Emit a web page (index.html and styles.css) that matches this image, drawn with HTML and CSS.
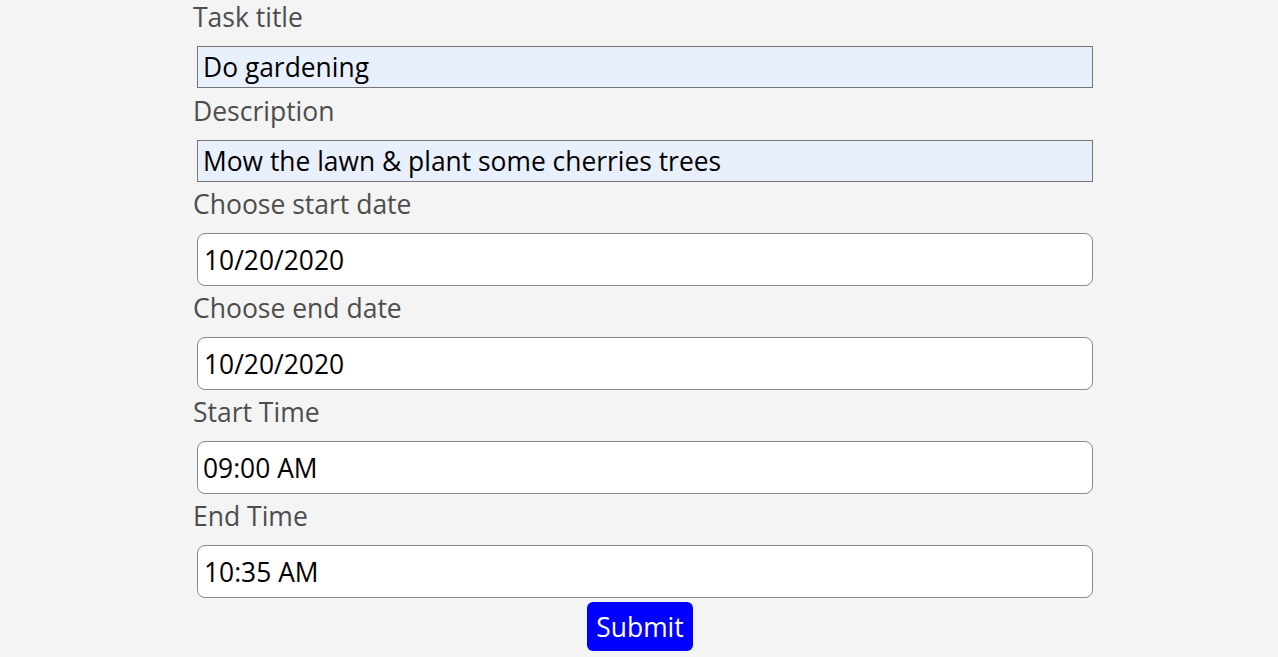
FILE: index.html
```html
<!DOCTYPE html>
<html lang="en">
<head>
<meta charset="utf-8">
<title>New task</title>
<link rel="stylesheet" href="styles.css">
</head>
<body>
<form class="task-form">
  <label class="field-label" for="title">Task title</label>
  <input class="text-input text-input-first" id="title" type="text" value="Do gardening">
  <label class="field-label" for="desc">Description</label>
  <input class="text-input" id="desc" type="text" value="Mow the lawn &amp; plant some cherries trees">
  <label class="field-label" for="sdate">Choose start date</label>
  <div class="picker" id="sdate">10/20/2020</div>
  <label class="field-label" for="edate">Choose end date</label>
  <div class="picker" id="edate">10/20/2020</div>
  <label class="field-label" for="stime">Start Time</label>
  <div class="picker picker-time" id="stime">09:00 AM</div>
  <label class="field-label" for="etime">End Time</label>
  <div class="picker" id="etime">10:35 AM</div>
  <button class="submit-btn" type="button">Submit</button>
</form>
</body>
</html>
```
FILE: styles.css
```css
html, body {
  margin: 0;
  padding: 0;
  background: #f4f4f4;
  font-family: "Open Sans", "Noto Sans", sans-serif;
}

.task-form {
  width: 892px;
  margin: 0 auto;
  padding-top: 2px;
  display: flex;
  flex-direction: column;
  align-items: flex-start;
}

.field-label {
  display: block;
  font-size: 26.5px;
  line-height: 30px;
  color: #4d4d4d;
  padding-top: 4px;
  margin-bottom: 14px;
}

.field-label:first-child {
  padding-top: 0;
}

.text-input {
  box-sizing: border-box;
  width: 896px;
  height: 42px;
  margin: 0 0 4px 4px;
  padding: 0 5px;
  border: 1px solid #767676;
  border-radius: 0;
  background: #e8f0fe;
  color: #000;
  font-family: inherit;
  font-size: 26.4px;
  outline: none;
}

.text-input-first {
  margin-bottom: 4px;
}

.text-input + .field-label + .text-input {
  margin-bottom: 3px;
}

.picker {
  box-sizing: border-box;
  width: 896px;
  height: 53px;
  margin: 0 0 3px 4px;
  padding: 0 6px;
  border: 1px solid #8a8a8a;
  border-radius: 8px;
  background: #fff;
  color: #000;
  font-size: 26.4px;
  display: flex;
  align-items: center;
}

.picker-time {
  padding-left: 5px;
}

.submit-btn {
  align-self: center;
  margin-top: 1px;
  margin-left: 2px;
  width: 106px;
  height: 49px;
  border: none;
  border-radius: 6px;
  background: #0000ff;
  color: #fff;
  font-family: inherit;
  font-size: 26.4px;
  padding: 0;
}
```
